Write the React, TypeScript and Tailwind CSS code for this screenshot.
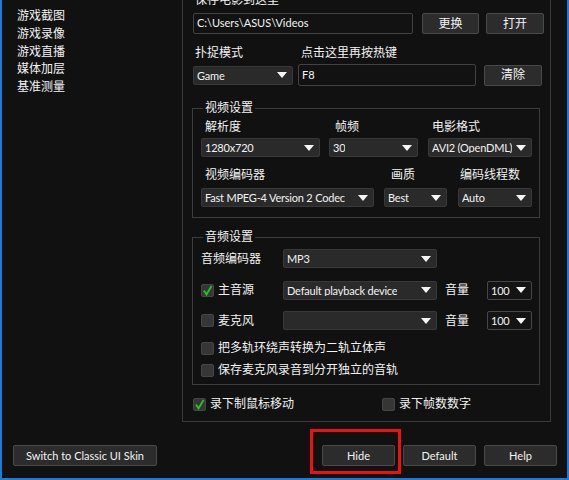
import React from 'react';

const menu = ['游戏截图', '游戏录像', '游戏直播', '媒体加层', '基准测量'];

function Arrow() {
    return (
        <svg width="10" height="6" viewBox="0 0 10 6" className="shrink-0">
            <path d="M0 0 L10 0 L5 6 Z" fill="#f5f5f5" />
        </svg>
    );
}

function Select({ value, className, dark }: { value?: string; className: string; dark?: boolean }) {
    return (
        <div
            className={`flex items-center justify-between pl-[3px] pr-[5px] rounded-[2px] border text-[11px] tracking-[-0.2px] ${
                dark ? 'bg-[#141414] border-[#474747]' : 'bg-[#2a2a2a] border-[#383838]'
            } ${className}`}
        >
            <span className="whitespace-nowrap overflow-hidden leading-none">{value}</span>
            <Arrow />
        </div>
    );
}

function Btn({ children, className }: { children: React.ReactNode; className: string }) {
    return (
        <div
            className={`flex items-center justify-center bg-[#2c2c2c] border border-[#4a4a4a] rounded-[2px] leading-none ${className}`}
        >
            {children}
        </div>
    );
}

function TextBox({ value, className }: { value: string; className: string }) {
    return (
        <div
            className={`flex items-center pl-[3px] text-[11px] bg-[#121212] border border-[#424242] rounded-[2px] ${className}`}
        >
            {value}
        </div>
    );
}

function Check({ checked }: { checked?: boolean }) {
    return (
        <div className="w-[13px] h-[13px] shrink-0 bg-[#363636] border border-[#464646] rounded-[2px] flex items-center justify-center">
            {checked && (
                <svg width="11" height="11" viewBox="0 0 11 11">
                    <path d="M2 5.5 L4.5 9.5 L9.5 1" fill="none" stroke="#22c722" strokeWidth="1.8" />
                </svg>
            )}
        </div>
    );
}

export default function App() {
    return (
        <div className="w-[569px] h-[480px] overflow-hidden bg-[#111111] border-l-2 border-r-2 border-b-2 border-[#1c7ad9] text-[12px] text-[#f2f2f2] font-['Lato','Noto_Sans_CJK_SC',sans-serif] flex flex-col">
            {/* Top area */}
            <div className="flex h-[422px] shrink-0">
                {/* Left menu */}
                <div className="w-[180px] shrink-0 pl-[15px] pt-[7px]">
                    {menu.map((m) => (
                        <div key={m} className="h-[17.75px] leading-[18px]">
                            {m}
                        </div>
                    ))}
                </div>

                {/* Settings panel */}
                <div className="w-[369px] shrink-0 border-l border-r border-b border-[#3a3a3a] pl-[10px]">
                    <div className="-mt-[9px] h-[18px] leading-[18px] pl-[2px]">保存电影到这里</div>
                    <div className="mt-[4px] flex items-center h-[21px]">
                        <TextBox value="C:\Users\ASUS\Videos" className="w-[220px] h-[21px]" />
                        <Btn className="ml-[9px] w-[57px] h-[21px]">更换</Btn>
                        <Btn className="ml-[7px] w-[58px] h-[21px]">打开</Btn>
                    </div>

                    <div className="mt-[10px] flex h-[18px] leading-[18px]">
                        <div className="w-[105px] pl-[2px]">扑捉模式</div>
                        <div className="pl-[3px]">点击这里再按热键</div>
                    </div>
                    <div className="mt-[2px] flex items-center h-[22px]">
                        <Select value="Game" className="w-[100px] h-[19px]" />
                        <TextBox value="F8" className="ml-[5px] w-[178px] h-[22px]" />
                        <Btn className="ml-[8px] w-[58px] h-[21px]">清除</Btn>
                    </div>

                    {/* Video settings */}
                    <fieldset className="mt-[13px] -ml-[1px] w-[348px] border border-[#3c3c3c] pl-[8px] pb-[10px]">
                        <legend className="ml-[2px] px-[2px] h-[18px] leading-[18px]">视频设置</legend>
                        <div className="mt-[1px] flex">
                            <div className="w-[119px]">
                                <div className="h-[18px] leading-[18px] pl-[4px]">解析度</div>
                                <Select value="1280x720" className="mt-[2px] h-[19px]" />
                            </div>
                            <div className="ml-[9px] w-[89px]">
                                <div className="h-[18px] leading-[18px] pl-[6px]">帧频</div>
                                <Select value="30" className="mt-[2px] h-[19px]" />
                            </div>
                            <div className="ml-[10px] w-[104px]">
                                <div className="h-[18px] leading-[18px] pl-[4px]">电影格式</div>
                                <Select value="AVI2 (OpenDML)" className="mt-[2px] h-[19px]" />
                            </div>
                        </div>
                        <div className="mt-[9px] flex">
                            <div className="w-[173px]">
                                <div className="h-[18px] leading-[18px] pl-[4px]">视频编码器</div>
                                <Select value="Fast MPEG-4 Version 2 Codec" className="mt-[4px] h-[19px]" />
                            </div>
                            <div className="ml-[10px] w-[63px]">
                                <div className="h-[18px] leading-[18px] pl-[7px]">画质</div>
                                <Select value="Best" className="mt-[4px] h-[19px]" />
                            </div>
                            <div className="ml-[11px] w-[74px]">
                                <div className="h-[18px] leading-[18px] pl-[2px]">编码线程数</div>
                                <Select value="Auto" className="mt-[4px] h-[19px]" />
                            </div>
                        </div>
                    </fieldset>

                    {/* Audio settings */}
                    <fieldset className="mt-[10px] -ml-[1px] w-[348px] border border-[#3c3c3c] pl-[8px] pb-[5px]">
                        <legend className="ml-[2px] px-[2px] h-[18px] leading-[18px]">音频设置</legend>
                        <div className="mt-[3px] flex items-center h-[19px]">
                            <span className="w-[82px]">音频编码器</span>
                            <Select value="MP3" className="w-[154px] h-[19px]" />
                        </div>
                        <div className="mt-[12px] flex items-center h-[20px]">
                            <Check checked />
                            <span className="ml-[4px] w-[65px]">主音源</span>
                            <Select value="Default playback device" className="w-[154px] h-[19px]" />
                            <span className="ml-[8px] w-[42px]">音量</span>
                            <Select value="100" dark className="w-[45px] h-[19px]" />
                        </div>
                        <div className="mt-[11px] flex items-center h-[19px]">
                            <Check />
                            <span className="ml-[4px] w-[65px]">麦克风</span>
                            <Select className="w-[154px] h-[19px]" />
                            <span className="ml-[8px] w-[42px]">音量</span>
                            <Select value="100" dark className="w-[45px] h-[19px]" />
                        </div>
                        <div className="mt-[9px] flex items-center h-[18px]">
                            <Check />
                            <span className="ml-[4px]">把多轨环绕声转换为二轨立体声</span>
                        </div>
                        <div className="mt-[4px] flex items-center h-[18px]">
                            <Check />
                            <span className="ml-[4px]">保存麦克风录音到分开独立的音轨</span>
                        </div>
                    </fieldset>

                    <div className="mt-[12px] flex items-center h-[14px]">
                        <div className="w-[189px] flex items-center">
                            <Check checked />
                            <span className="ml-[4px]">录下制鼠标移动</span>
                        </div>
                        <Check />
                        <span className="ml-[4px]">录下帧数数字</span>
                    </div>
                </div>
            </div>

            {/* Bottom buttons */}
            <div className="mt-[23px] flex items-center pl-[11px] pr-[10px] text-[11px]">
                <Btn className="w-[144px] h-[21px]">Switch to Classic UI Skin</Btn>
                <div className="ml-auto flex gap-[8px]">
                    <div className="relative">
                        <Btn className="w-[73px] h-[21px]">Hide</Btn>
                        <div className="absolute -left-[12px] -right-[6px] -top-[16px] -bottom-[8px] border-[3px] border-[#ee1111]" />
                    </div>
                    <Btn className="w-[73px] h-[21px]">Default</Btn>
                    <Btn className="w-[73px] h-[21px]">Help</Btn>
                </div>
            </div>
        </div>
    );
}
